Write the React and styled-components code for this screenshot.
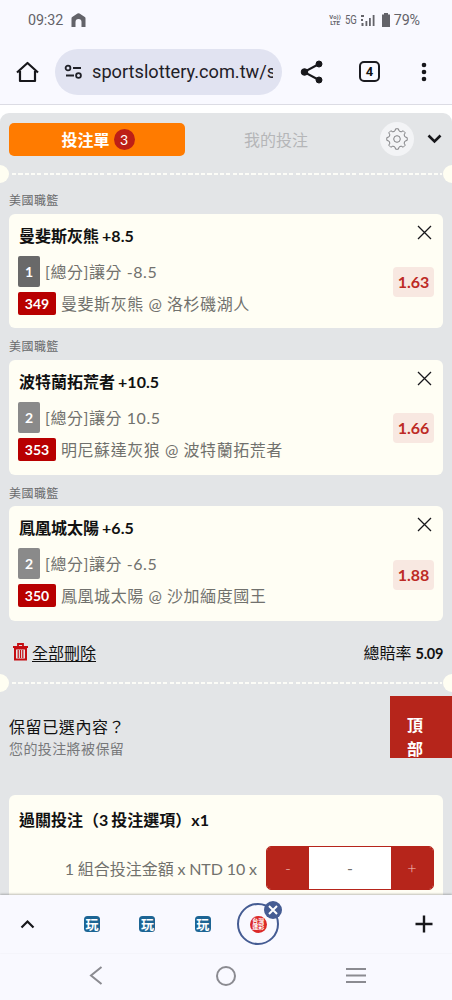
import React from "react";
import styled, { createGlobalStyle } from "styled-components";

const GlobalStyle = createGlobalStyle`
  *, *::before, *::after { box-sizing: border-box; }
  body { margin: 0; background: #fff; }
  button { font: inherit; border: 0; padding: 0; background: none; color: inherit; }
  svg { display: block; flex: none; }
`;

const Screen = styled.div`
  width: 452px;
  height: 1000px;
  overflow: hidden;
  display: flex;
  flex-direction: column;
  background: #fff;
  font-family: Lato, "Noto Sans CJK TC", sans-serif;
  font-size: 16px;
  color: #111;
  white-space: nowrap;
`;

const StatusBar = styled.header`
  flex: none;
  height: 40px;
  padding: 0 32px 0 28px;
  display: flex;
  align-items: center;
  justify-content: space-between;
  background: #f9f9ff;
  color: #636369;
  font: 14px/40px Roboto, sans-serif;
`;

const StatusGroup = styled.div`
  display: flex;
  align-items: center;
  gap: ${(p) => p.$gap}px;
`;

const Clock = styled.span`
  font-size: 14.3px;
  letter-spacing: -0.1px;
`;

const Volte = styled.span`
  display: flex;
  flex-direction: column;
  font-size: 6px;
  font-weight: 700;
  line-height: 6px;
  text-align: center;
`;

const Network = styled.span`
  width: 12px;
  font-size: 12px;
  letter-spacing: -0.2px;
  transform: scaleX(0.8);
  transform-origin: left;
`;

const Toolbar = styled.nav`
  flex: none;
  height: 65px;
  padding: 0 17px 1px 15px;
  display: flex;
  align-items: center;
  background: #f9f9ff;
  border-bottom: 1px solid #dcdce4;
`;

const Address = styled.div`
  width: 227px;
  height: 46px;
  margin: 0 18px 0 15px;
  padding: 0 9px 0 9px;
  display: flex;
  align-items: center;
  gap: 9px;
  border-radius: 23px;
  background: #e1e3f1;
`;

const Url = styled.span`
  flex: 1;
  overflow: hidden;
  color: #1f2027;
  font: 18.2px/28px Roboto, sans-serif;
`;

const TabCount = styled.span`
  width: 21px;
  height: 21px;
  margin: 0 41px 0 35px;
  display: grid;
  place-items: center;
  border: 2px solid #1b1b20;
  border-radius: 5px;
  font: 700 13px/17px Roboto, sans-serif;
`;

const Page = styled.main`
  flex: 1;
  min-height: 0;
  overflow: hidden;
  position: relative;
  padding-top: 8px;
`;

const Sheet = styled.section`
  height: 900px;
  border-radius: 9px 9px 0 0;
  background: #e3e5e7;
`;

const Tabs = styled.div`
  height: 52px;
  padding: 0 9px;
  display: flex;
  align-items: center;
`;

const SlipTab = styled.button`
  width: 176px;
  height: 33px;
  padding-left: 2px;
  display: flex;
  align-items: center;
  justify-content: center;
  gap: 4px;
  border-radius: 5px;
  background: #ff7b00;
  color: #fff;
  font-weight: 700;
`;

const CountBadge = styled.span`
  width: 21px;
  height: 21px;
  border-radius: 50%;
  background: #bd1f16;
  font: 14px/21px Lato, sans-serif;
`;

const MyBetsTab = styled.button`
  width: 182px;
  color: #b5b6b8;
`;

const SettingsButton = styled.button`
  width: 34px;
  height: 34px;
  margin: 0 13px;
  display: grid;
  place-items: center;
  border-radius: 50%;
  background: #f3f4f6;
`;

const TicketDivider = styled.div`
  height: 18px;
  margin-bottom: -1px;
  display: flex;
  align-items: center;
  justify-content: space-between;
  overflow: hidden;
  &::before, &::after {
    content: "";
    flex: none;
    width: 18px;
    height: 18px;
    border-radius: 50%;
    background: #fffef2;
  }
  &::before { margin-left: -9px; }
  &::after { margin-right: -9px; }
`;

const Dashes = styled.div`
  flex: 1;
  height: 2.5px;
  margin: 0 1px 0 3px;
  background: repeating-linear-gradient(90deg, #fcfcf7 0 4.2px, transparent 4.2px 6.3px);
`;

const Picks = styled.div`
  padding: 0 9px;
`;

const League = styled.h3`
  height: 31.5px;
  margin: 0;
  padding-top: 9px;
  color: #68696b;
  font-size: 12px;
  font-weight: 400;
  line-height: 19px;
  letter-spacing: 0.45px;
`;

const Card = styled.article`
  height: ${(p) => p.$height || 114.8}px;
  padding: 0 9px;
  border-radius: 6px;
  background: #fffef4;
`;

const CardHead = styled.div`
  height: 42px;
  padding: ${(p) => (p.$low ? 6 : 0)}px 2px 0 1px;
  display: flex;
  align-items: center;
  justify-content: space-between;
`;

const CardTitle = styled.h4`
  margin: 0;
  padding-top: 2px;
  font-size: 16px;
  font-weight: 700;
  line-height: 24px;
  word-spacing: -0.8px;
`;

const PickBody = styled.div`
  display: flex;
  align-items: center;
  justify-content: space-between;
`;

const PickLines = styled.div`
  display: flex;
  flex-direction: column;
  gap: 5px;
`;

const Line = styled.div`
  display: flex;
  align-items: center;
  gap: 5px;
  color: #71716d;
  line-height: 23px;
  letter-spacing: 0.55px;
`;

const Side = styled.span`
  width: 22px;
  height: 31px;
  border-radius: 2px;
  background: ${(p) => (p.$dark ? "#696969" : "#8a8a8a")};
  color: #fff;
  font: 700 14px/31px Lato, sans-serif;
  text-align: center;
  letter-spacing: 0;
`;

const GameNo = styled(Side)`
  width: 38px;
  height: 23px;
  background: #b80000;
  line-height: 23px;
`;

const Odds = styled.span`
  width: 41px;
  height: 30px;
  margin-bottom: 6px;
  border-radius: 4px;
  background: #f8e8e1;
  color: #bd2b25;
  font-weight: 700;
  line-height: 30px;
  text-align: center;
`;

const Summary = styled.div`
  height: 53px;
  padding: 9px 9px 0 13px;
  display: flex;
  align-items: center;
  justify-content: space-between;
`;

const DeleteAll = styled.button`
  display: flex;
  align-items: center;
  gap: 4px;
  text-decoration: underline;
  text-underline-offset: 2px;
`;

const TotalOdds = styled.span`
  b {
    font-size: 14.5px;
    letter-spacing: -0.3px;
  }
`;

const Keep = styled.div`
  height: 104px;
  padding: 24px 9px 0;
`;

const KeepTitle = styled.div`
  line-height: 24px;
  letter-spacing: 0.6px;
`;

const KeepNote = styled.div`
  color: #77787a;
  font-size: 14px;
  line-height: 20px;
  letter-spacing: 0.4px;
`;

const BetArea = styled.div`
  padding: 0 9px;
`;

const StakeRow = styled.div`
  height: 44px;
  margin-top: 9px;
  display: flex;
  align-items: center;
  justify-content: flex-end;
  gap: 9px;
  color: #71716d;
  word-spacing: -0.35px;
`;

const Stepper = styled.div`
  width: 168px;
  height: 44px;
  display: flex;
  border: 1px solid #b6251b;
  border-radius: 5px;
  overflow: hidden;
  background: #fff;
`;

const StepButton = styled.button`
  width: 42px;
  background: #b6251b;
  color: #f4c3bc;
  font-weight: 300;
`;

const StepValue = styled.span`
  flex: 1;
  line-height: 42px;
  text-align: center;
`;

const TopButton = styled.button`
  position: absolute;
  right: 0;
  top: 591px;
  width: 62px;
  height: 62px;
  padding: 17px 12px 0 0;
  overflow: hidden;
  background: #b6251b;
  color: #fff;
  font-weight: 700;
  line-height: 23.5px;
  display: flex;
  flex-direction: column;
  align-items: center;
`;

const TabStrip = styled.div`
  flex: none;
  position: relative;
  height: 58px;
  padding: 0 19px 0 20px;
  display: flex;
  align-items: center;
  background: #f9f9ff;
  box-shadow: 0 -1px 2px rgba(0, 0, 0, 0.25);
`;

const SiteTabs = styled.div`
  flex: 1;
  margin-left: 49px;
  display: flex;
  align-items: center;
  gap: 39.4px;
`;

const SiteIcon = styled.span`
  width: 16px;
  height: 16px;
  border-radius: 3.5px;
  background: #1d6594;
  color: #fff;
  font: 700 13px/15px "Noto Sans CJK TC", sans-serif;
  text-align: center;
`;

const ActiveTab = styled.span`
  position: relative;
  width: 42px;
  height: 42px;
  margin-left: -13px;
  display: grid;
  place-items: center;
  border: 2px solid #455c93;
  border-radius: 50%;
`;

const LotteryIcon = styled.span`
  width: 17px;
  height: 17px;
  padding-top: 2px;
  display: flex;
  flex-direction: column;
  align-items: center;
  border-radius: 50%;
  background: #db2929;
  color: #fff;
  font: 700 6px/6.3px "Noto Sans CJK TC", sans-serif;
`;

const CloseBadge = styled.span`
  position: absolute;
  top: -4px;
  right: -5px;
  width: 18px;
  height: 18px;
  display: grid;
  place-items: center;
  border-radius: 50%;
  background: #455c93;
`;

const SystemNav = styled.footer`
  flex: none;
  height: 47px;
  padding: 0 86px 2px 89px;
  display: flex;
  align-items: center;
  justify-content: space-between;
  background: #f9f9ff;
`;

const Stroke = ({ w, h = w, d, color = "#17171b", width = 2, ...rest }) => (
  <svg width={w} height={h} viewBox={`0 0 ${w} ${h}`} fill="none" stroke={color} strokeWidth={width} {...rest}>
    <path d={d} />
  </svg>
);

const CloseIcon = styled(Stroke)`
  margin-bottom: 5px;
`;

const HomeCircle = styled.svg`
  margin-left: 3px;
`;

const TuneIcon = () => (
  <svg width="19" height="16" viewBox="0 0 19 16" fill="none" stroke="#1f2027" strokeWidth="1.8">
    <circle cx="4" cy="4" r="2.4" />
    <circle cx="14.5" cy="11.5" r="2.4" />
    <path d="M9 4h8M2 11.5h8" />
  </svg>
);

const ShareIcon = () => (
  <svg width="24" height="24" viewBox="0 0 24 24" fill="#17171b" stroke="#17171b">
    <path d="M19 4 4 12l15 8" fill="none" strokeWidth="2" />
    <circle cx="19" cy="4" r="3" />
    <circle cx="4.5" cy="12" r="3.3" />
    <circle cx="19" cy="20" r="3" />
  </svg>
);

const SignalIcon = () => (
  <svg width="14" height="12" viewBox="0 0 14 12" fill="#636369">
    <path d="M0 1h3v2H0zM0 5h2v2H0zM.5 9h2v3h-2zM4.5 7h1.8v5H4.5zM8 4h1.8v8H8zM11.7 1h1.8v11h-1.8z" />
  </svg>
);

const TrashIcon = () => (
  <svg width="15" height="18" viewBox="0 0 15 18" fill="none" stroke="#c50d12">
    <path d="M0 4h15M5 3V1h5v2" strokeWidth="1.8" />
    <path d="M2 5.5v11h11v-11z" strokeWidth="2" />
    <path d="M5.2 7v8M7.5 7v8M9.8 7v8" strokeWidth="1.2" />
  </svg>
);

const gearPath = (() => {
  const points = [];
  for (let i = 0; i < 8; i += 1) {
    [[-15, 8.2], [-8, 10.3], [8, 10.3], [15, 8.2]].forEach(([offset, r]) => {
      const a = ((i * 45 + offset) * Math.PI) / 180;
      points.push(`${(11 + r * Math.sin(a)).toFixed(2)} ${(11 - r * Math.cos(a)).toFixed(2)}`);
    });
  }
  return `M${points.join("L")}Z`;
})();

const GearIcon = () => (
  <svg width="22" height="22" viewBox="0 0 22 22" fill="none" stroke="#808184" strokeLinejoin="round">
    <path d={gearPath} />
    <circle cx="11" cy="11" r="3.3" />
  </svg>
);

const picks = [
  { team: "曼斐斯灰熊 +8.5", side: 1, line: "[總分]讓分 -8.5", no: 349, game: "曼斐斯灰熊 @ 洛杉磯湖人", odds: "1.63" },
  { team: "波特蘭拓荒者 +10.5", side: 2, line: "[總分]讓分 10.5", no: 353, game: "明尼蘇達灰狼 @ 波特蘭拓荒者", odds: "1.66" },
  { team: "鳳凰城太陽 +6.5", side: 2, line: "[總分]讓分 -6.5", no: 350, game: "鳳凰城太陽 @ 沙加緬度國王", odds: "1.88" },
];

const Pick = ({ pick }) => (
  <>
    <League>美國職籃</League>
    <Card>
      <CardHead>
        <CardTitle>{pick.team}</CardTitle>
        <CloseIcon w={15} d="M1 1l13 13M14 1L1 14" width={1.3} />
      </CardHead>
      <PickBody>
        <PickLines>
          <Line><Side $dark={pick.side === 1}>{pick.side}</Side>{pick.line}</Line>
          <Line><GameNo>{pick.no}</GameNo>{pick.game}</Line>
        </PickLines>
        <Odds>{pick.odds}</Odds>
      </PickBody>
    </Card>
  </>
);

export default function App() {
  return (
    <Screen>
      <GlobalStyle />
      <StatusBar>
        <StatusGroup $gap={8}>
          <Clock>09:32</Clock>
          <svg width="15" height="14" viewBox="0 0 15 14" fill="#636369">
            <path d="M.5 14V5.2Q.5 4.4 1.2 3.9L6.5.5q1-.6 2 0l5.3 3.4q.7.5.7 1.3V14h-4V9a3 3 0 0 0-6 0v5z" />
          </svg>
        </StatusGroup>
        <StatusGroup $gap={4}>
          <Volte><span>Vo))</span><span>LTE</span></Volte>
          <Network>5G</Network>
          <SignalIcon />
          <svg width="11" height="14" viewBox="0 0 11 14" fill="#636369">
            <path d="M5 0h4v1.5h2V14H3V1.5h2z" />
          </svg>
          <Clock>79%</Clock>
        </StatusGroup>
      </StatusBar>

      <Toolbar>
        <Stroke w={25} h={24} d="M5 11v10h15V11M2 12.5 12.5 3 23 12.5" width={2.2} strokeLinejoin="round" />
        <Address>
          <TuneIcon />
          <Url>sportslottery.com.tw/s</Url>
        </Address>
        <ShareIcon />
        <TabCount>4</TabCount>
        <svg width="6" height="20" viewBox="0 0 6 20" fill="#17171b">
          <circle cx="3" cy="3" r="2.3" /><circle cx="3" cy="10" r="2.3" /><circle cx="3" cy="17" r="2.3" />
        </svg>
      </Toolbar>

      <Page>
        <Sheet>
          <Tabs>
            <SlipTab>投注單<CountBadge>3</CountBadge></SlipTab>
            <MyBetsTab>我的投注</MyBetsTab>
            <SettingsButton><GearIcon /></SettingsButton>
            <Stroke w={15} h={10} d="M1.5 1.5l6 6 6-6" width={2.6} />
          </Tabs>
          <TicketDivider><Dashes /></TicketDivider>
          <Picks>
            {picks.map((pick) => <Pick key={pick.no} pick={pick} />)}
          </Picks>
          <Summary>
            <DeleteAll><TrashIcon />全部刪除</DeleteAll>
            <TotalOdds>總賠率 <b>5.09</b></TotalOdds>
          </Summary>
          <TicketDivider><Dashes /></TicketDivider>
          <Keep>
            <KeepTitle>保留已選內容？</KeepTitle>
            <KeepNote>您的投注將被保留</KeepNote>
          </Keep>
          <BetArea>
            <Card $height={140}>
              <CardHead $low><CardTitle>過關投注（3 投注選項）x1</CardTitle></CardHead>
              <StakeRow>
                1 組合投注金額 x NTD 10 x
                <Stepper>
                  <StepButton>-</StepButton>
                  <StepValue>-</StepValue>
                  <StepButton>+</StepButton>
                </Stepper>
              </StakeRow>
            </Card>
          </BetArea>
        </Sheet>
        <TopButton><span>頂</span><span>部</span></TopButton>
      </Page>

      <TabStrip>
        <Stroke w={15} h={10} d="M1.5 8.5l6-6 6 6" width={2.2} />
        <SiteTabs>
          <SiteIcon>玩</SiteIcon>
          <SiteIcon>玩</SiteIcon>
          <SiteIcon>玩</SiteIcon>
          <ActiveTab>
            <LotteryIcon><span>台灣</span><span>運彩</span></LotteryIcon>
            <CloseBadge><Stroke w={10} d="M1 1l8 8M9 1L1 9" color="#fff" /></CloseBadge>
          </ActiveTab>
        </SiteTabs>
        <Stroke w={18} d="M9 .5v17M.5 9h17" width={2.4} />
      </TabStrip>

      <SystemNav>
        <Stroke w={14} h={19} d="M12.5 1L2 9.5 12.5 18" color="#8b8b91" />
        <HomeCircle width="20" height="20" viewBox="0 0 20 20" fill="none" stroke="#8b8b91" strokeWidth="2">
          <circle cx="10" cy="10" r="9" />
        </HomeCircle>
        <Stroke w={20} h={17} d="M0 2h20M0 8.5h20M0 15h20" color="#8b8b91" />
      </SystemNav>
    </Screen>
  );
}
